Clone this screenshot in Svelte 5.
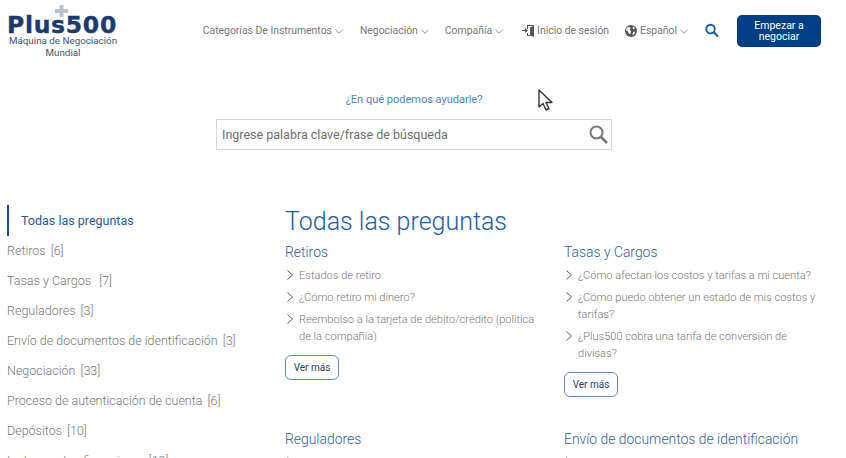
<script lang="ts">
  const nav = ['Categorías De Instrumentos', 'Negociación', 'Compañía'];
  const side = [
    ['Retiros', '[6]'],
    ['Tasas y Cargos ', '[7]'],
    ['Reguladores', '[3]'],
    ['Envío de documentos de identificación', '[3]'],
    ['Negociación', '[33]'],
    ['Proceso de autenticación de cuenta', '[6]'],
    ['Depósitos', '[10]'],
    ['Instrumentos financieros', '[19]']
  ];
  const rows = [
    [
      { t: 'Retiros', q: ['Estados de retiro', '¿Cómo retiro mi dinero?', 'Reembolso a la tarjeta de débito/crédito (política de la compañía)'] },
      { t: 'Tasas y Cargos', q: ['¿Cómo afectan los costos y tarifas a mi cuenta?', '¿Cómo puedo obtener un estado de mis costos y tarifas?', '¿Plus500 cobra una tarifa de conversión de divisas?'] }
    ],
    [
      { t: 'Reguladores', q: ['¿Quién regula a Plus500?'] },
      { t: 'Envío de documentos de identificación', q: ['¿Qué documentos debo enviar?'] }
    ]
  ];
</script>

<div class="page">
  <header>
    <div class="logo">
      <div class="mark">
        <span class="word">Plus500</span>
        <svg class="cross" width="13" height="12" viewBox="0 0 13 12"><path d="M4.5 0h4v4H13v4H8.500v4h-4V8H0V4h4.500z" fill="#b9c3cf" /></svg>
      </div>
      <div class="tag">Máquina de Negociación<br />Mundial</div>
    </div>
    <nav>
      {#each nav as n}
        <span class="item">{n}<svg class="caret" width="8" height="5" viewBox="0 0 9 5"><path d="M.5.500l4 4 4-4" fill="none" stroke="#666" stroke-width=".8" /></svg></span>
      {/each}
      <span class="item login">
        <svg width="12" height="13" viewBox="0 0 12 13"><path d="M5 1h7v12l-4-1.500V3.500L11 2H6v3H5zM5 9h1v2h2v1H5z" fill="#555" /><path d="M0 6h3V4l3 2.500L3 9V7H0z" fill="#555" /></svg>
        Inicio de sesión
      </span>
      <span class="item lang">
        <svg width="12" height="12" viewBox="0 0 12 12"><circle cx="6" cy="6" r="6" fill="#555" /><path d="M2 2.500l2.500-.5 1 1.500-1 1.500 1.500 1-.5 2.500-1.500.5L3 6.500 1 5zM8 1.500l2 1.500-1 1.500-1.500-1zM8 7l2.500-.5L9 9.500l-1.500.5z" fill="#fff" /></svg>
        Español<svg class="caret" width="8" height="5" viewBox="0 0 9 5"><path d="M.5.500l4 4 4-4" fill="none" stroke="#666" stroke-width=".8" /></svg>
      </span>
      <svg class="search" width="14" height="15" viewBox="0 0 16 16"><circle cx="6.300" cy="6.300" r="4.900" fill="none" stroke="#0f5aa6" stroke-width="2.100" /><path d="M10 10l5 5" stroke="#0f5aa6" stroke-width="2.400" /></svg>
      <button class="cta">Empezar a negociar</button>
    </nav>
  </header>

  <section class="help">
    <p>¿En qué podemos ayudarle?</p>
    <div class="box">
      <span>Ingrese palabra clave/frase de búsqueda</span>
      <svg width="19" height="19" viewBox="0 0 19 19"><circle cx="7.500" cy="7.500" r="6" fill="none" stroke="#777" stroke-width="2" /><path d="M12 12l6 6" stroke="#777" stroke-width="2.600" /></svg>
    </div>
  </section>

  <div class="content">
    <aside>
      <div class="current">Todas las preguntas</div>
      {#each side as s}
        <div class="cat">{s[0]}<span class="num">{s[1]}</span></div>
      {/each}
    </aside>
    <main>
      <h1>Todas las preguntas</h1>
      {#each rows as row}
        <div class="row">
          {#each row as b}
            <div class="block">
              <h2>{b.t}</h2>
              <ul>
                {#each b.q as q}
                  <li>
                    <svg width="8" height="12" viewBox="0 0 8 12"><path d="M2.500 1.500l5 4.500-5 4.500" fill="none" stroke="#555" stroke-width="1" /></svg>
                    <span>{q}</span>
                  </li>
                {/each}
              </ul>
              <button class="more">Ver más</button>
            </div>
          {/each}
        </div>
      {/each}
    </main>
  </div>

  <!-- cursor del ratón que aparece en la captura -->
  <svg class="pointer" width="17" height="24" viewBox="0 0 17 24"><path d="M1 1v17l4-3.500 3 6.500 3-1.500-3-6h6z" fill="#fff" stroke="#333" stroke-width="1.400" stroke-linejoin="round" /></svg>
</div>

<style>
  :global(body) { margin: 0; background: #fff; }
  .page { position: relative; height: 458px; overflow: hidden; font-family: Roboto, "Liberation Sans", sans-serif; color: #777; }

  header { display: flex; justify-content: space-between; align-items: flex-start; padding: 0 25px 0 8px; height: 60px; }
  .logo { width: 110px; text-align: center; }
  .mark { position: relative; padding-top: 15px; height: 20px; text-align: left; }
  .cross { position: absolute; left: 47px; top: 5px; }
  .word { font-family: "DejaVu Sans", sans-serif; font-weight: 700; font-size: 23.500px; line-height: 20px; color: #1b3a70; letter-spacing: .7px; margin-left: -1px; -webkit-text-stroke: .4px #1b3a70; display: block; white-space: nowrap; }
  .tag { font-size: 9.800px; line-height: 11.500px; color: #44556f; white-space: nowrap; }

  nav { display: flex; align-items: center; gap: 17px; height: 31px; margin-top: 15px; font-size: 10.400px; }
  .item { display: flex; align-items: center; gap: 3px; white-space: nowrap; color: #777; }
  .item:nth-child(2) { margin-right: -1px; }
  .caret { margin-top: 1px; }
  .login { margin-left: 2px; gap: 3px; }
  .lang { margin-left: -1px; }
  .search { margin-right: 1px; }
  .cta { width: 84px; height: 32px; background: #003f84; color: #fff; border: 0; border-radius: 5px; font: 10.500px/11px Roboto, sans-serif; padding: 0 8px; }

  .help { display: flex; flex-direction: column; align-items: center; padding-right: 18px; }
  .help p { margin: 32px 0 0; font-size: 11px; line-height: 16px; color: #4a86c0; }
  .box { box-sizing: border-box; width: 396px; height: 31px; margin-top: 11px; border: 1px solid #d6d6d6; display: flex; align-items: center; justify-content: space-between; padding: 0 3px 0 5px; font-size: 12.500px; color: #6e6e6e; }

  .content { display: flex; margin-top: 55px; padding-left: 7px; }
  aside { width: 278px; flex: none; font-size: 12.500px; font-weight: 300; }
  .current { border-left: 2.500px solid #0f4e96; height: 31px; line-height: 32px; padding-left: 12px; color: #1c5a9e; font-weight: 400; }
  .cat { height: 30px; line-height: 29px; white-space: pre; }
  .num { margin-left: 5px; }

  h1 { margin: 1px 0 0; font-size: 25px; font-weight: 300; line-height: 32px; color: #1a5ea8; }
  .row { display: flex; gap: 19px; }
  .block { width: 260px; margin-bottom: 28px; }
  h2 { margin: 4px 0 0; font-size: 13.900px; font-weight: 300; line-height: 20px; color: #2e5f9c; }
  ul { list-style: none; margin: 5px 0 0; padding: 0; font-size: 11.100px; font-weight: 300; line-height: 17px; }
  li { display: flex; gap: 6px; margin-bottom: 5px; }
  li svg { flex: none; margin-top: 2px; }
  .more { display: block; margin-top: 10px; width: 54px; height: 25px; padding: 0; background: #fff; border: 1px solid #5a8cc0; border-radius: 6px; color: #1f3f6b; font: 10px Roboto, sans-serif; }
  .pointer { position: absolute; left: 538px; top: 89px; }
</style>
